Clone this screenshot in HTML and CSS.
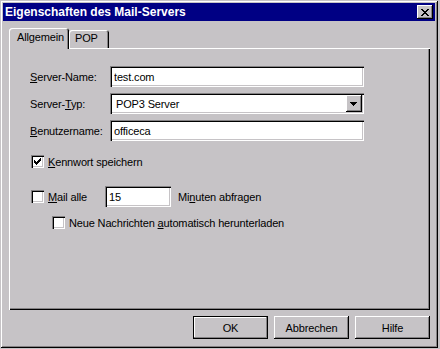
FILE: index.html
```html
<!DOCTYPE html>
<html lang="de">
<head>
    <meta charset="UTF-8">
    <title>Eigenschaften des Mail-Servers</title>
    <link rel="stylesheet" href="styles.css">
</head>
<body>
    <!-- Dialogfenster -->
    <div class="window">
        <!-- Titelleiste -->
        <div class="titlebar">
            <span class="title">Eigenschaften des Mail-Servers</span>
            <span class="close-btn">
                <svg width="8" height="7" viewBox="0 0 8 7" shape-rendering="crispEdges">
                    <path d="M0 0h2v1H0z M6 0h2v1H6z M1 1h2v1H1z M5 1h2v1H5z M2 2h4v1H2z M3 3h2v1H3z M2 4h4v1H2z M1 5h2v1H1z M5 5h2v1H5z M0 6h2v1H0z M6 6h2v1H6z" fill="#000"/>
                </svg>
            </span>
        </div>

        <div class="content">
            <!-- Registerkarten -->
            <div class="tabs">
                <div class="tab tab-active">Allgemein</div>
                <div class="tab">POP</div>
            </div>

            <div class="panel">
                <div class="field-row">
                    <span class="label"><u>S</u>erver-Name:</span>
                    <input class="textbox" type="text" value="test.com">
                </div>
                <div class="field-row">
                    <span class="label">Server-<u>T</u>yp:</span>
                    <div class="combo">
                        <span class="combo-value">POP3 Server</span>
                        <span class="combo-btn">
                            <svg width="7" height="4" viewBox="0 0 7 4" shape-rendering="crispEdges">
                                <path d="M0 0h7v1H0z M1 1h5v1H1z M2 2h3v1H2z M3 3h1v1H3z" fill="#000"/>
                            </svg>
                        </span>
                    </div>
                </div>
                <div class="field-row">
                    <span class="label"><u>B</u>enutzername:</span>
                    <input class="textbox" type="text" value="officeca">
                </div>

                <div class="check-row check-first">
                    <span class="checkbox">
                        <svg width="7" height="7" viewBox="0 0 7 7" shape-rendering="crispEdges">
                            <path d="M6 0h1v1H6z M5 1h2v1H5z M0 2h1v1H0z M4 2h3v1H4z M0 3h2v1H0z M3 3h3v1H3z M0 4h5v1H0z M1 5h3v1H1z M2 6h1v1H2z" fill="#000"/>
                        </svg>
                    </span>
                    <span class="check-label"><u>K</u>ennwort speichern</span>
                </div>

                <div class="check-row check-mail">
                    <span class="checkbox"></span>
                    <span class="check-label mail-label"><u>M</u>ail alle</span>
                    <input class="textbox small-box" type="text" value="15">
                    <span class="after-label">Mi<u>n</u>uten abfragen</span>
                </div>

                <div class="check-row check-sub">
                    <span class="checkbox"></span>
                    <span class="check-label">Neue Nachrichten <u>a</u>utomatisch herunterladen</span>
                </div>
            </div>

            <!-- Schaltflächen -->
            <div class="buttons">
                <span class="button button-default">OK</span>
                <span class="button">Abbrechen</span>
                <span class="button">Hilfe</span>
            </div>
        </div>
    </div>
</body>
</html>
```

FILE: styles.css
```css
/* Grundeinstellungen */
* {
    margin: 0;
    padding: 0;
    box-sizing: border-box;
}

body {
    background: #c6c3c6;
    font-family: "Liberation Sans", Arial, sans-serif;
    font-size: 11px;
    letter-spacing: -0.15px;
    color: #000;
}

/* Fensterrahmen im Win95-Stil */
.window {
    width: 438px;
    height: 348px;
    padding: 3px;
    background: #c6c3c6;
    box-shadow: inset 1px 1px #c6c3c6, inset -1px -1px #000,
                inset 2px 2px #fff, inset -2px -2px #848284;
    display: flex;
    flex-direction: column;
}

/* Titelleiste */
.titlebar {
    height: 18px;
    background: #000084;
    color: #fff;
    display: flex;
    align-items: center;
    justify-content: space-between;
    padding: 0 2px;
}

.title {
    font-weight: bold;
    font-size: 12px;
    letter-spacing: 0;
}

.close-btn {
    width: 16px;
    height: 14px;
    background: #c6c3c6;
    box-shadow: inset -1px -1px #000, inset 1px 1px #fff, inset -2px -2px #848284;
    display: flex;
    align-items: center;
    justify-content: center;
    padding-right: 1px;
}

/* Inhalt unter der Titelleiste */
.content {
    padding: 7px 5px 0 6px;
}

/* Registerkarten */
.tabs {
    display: flex;
    align-items: flex-end;
    height: 20px;
}

.tab {
    height: 18px;
    width: 40px;
    padding-left: 6px;
    line-height: 17px;
    background: #c6c3c6;
    border-radius: 3px 3px 0 0;
    box-shadow: inset 1px 1px #fff, inset -1px 0 #000, inset -2px 0 #848284;
}

.tab-active {
    position: relative;
    z-index: 1;
    width: 60px;
    height: 21px;
    margin-bottom: -1px;
    padding-left: 8px;
    line-height: 19px;
}

/* Registerfläche */
.panel {
    width: 421px;
    height: 262px;
    padding: 18px 0 0 21px;
    box-shadow: inset 1px 1px #fff, inset -1px -1px #000, inset -2px -2px #848284;
}

/* Eingabezeilen */
.field-row {
    display: flex;
    align-items: center;
    height: 21px;
    margin-bottom: 6px;
}

.label {
    width: 80px;
}

.textbox {
    width: 254px;
    height: 21px;
    border: none;
    outline: none;
    background: #fff;
    font: inherit;
    letter-spacing: inherit;
    color: #000;
    padding: 1px 0 0 4px;
    box-shadow: inset 1px 1px #848284, inset 2px 2px #000,
                inset -1px -1px #fff, inset -2px -2px #c6c3c6;
}

/* Auswahlliste */
.combo {
    width: 254px;
    height: 21px;
    background: #fff;
    display: flex;
    align-items: center;
    justify-content: space-between;
    padding: 2px 2px 2px 6px;
    box-shadow: inset 1px 1px #848284, inset 2px 2px #000,
                inset -1px -1px #fff, inset -2px -2px #c6c3c6;
}

.combo-btn {
    width: 16px;
    height: 17px;
    background: #c6c3c6;
    box-shadow: inset -1px -1px #000, inset 1px 1px #fff, inset -2px -2px #848284;
    display: flex;
    align-items: center;
    justify-content: center;
    padding-right: 1px;
}

/* Kontrollkästchen */
.check-row {
    display: flex;
    align-items: center;
    height: 21px;
    padding-left: 1px;
}

.check-first {
    margin-top: 10px;
}

.check-mail {
    margin-top: 14px;
}

.check-sub {
    margin-top: 5px;
    padding-left: 22px;
}

.checkbox {
    width: 13px;
    height: 13px;
    background: #fff;
    display: flex;
    align-items: center;
    justify-content: center;
    box-shadow: inset 1px 1px #848284, inset 2px 2px #000,
                inset -1px -1px #fff, inset -2px -2px #c6c3c6;
}

.check-label {
    margin-left: 4px;
}

.mail-label {
    width: 57px;
}

.small-box {
    width: 66px;
}

.after-label {
    margin-left: 7px;
}

/* Schaltflächenleiste */
.buttons {
    display: flex;
    justify-content: flex-end;
    gap: 6px;
    margin-top: 6px;
}

.button {
    width: 75px;
    height: 23px;
    display: flex;
    align-items: center;
    justify-content: center;
    background: #c6c3c6;
    box-shadow: inset -1px -1px #000, inset 1px 1px #fff, inset -2px -2px #848284;
}

.button-default {
    border: 1px solid #000;
    box-shadow: inset -1px -1px #848284, inset 1px 1px #fff;
}
```
